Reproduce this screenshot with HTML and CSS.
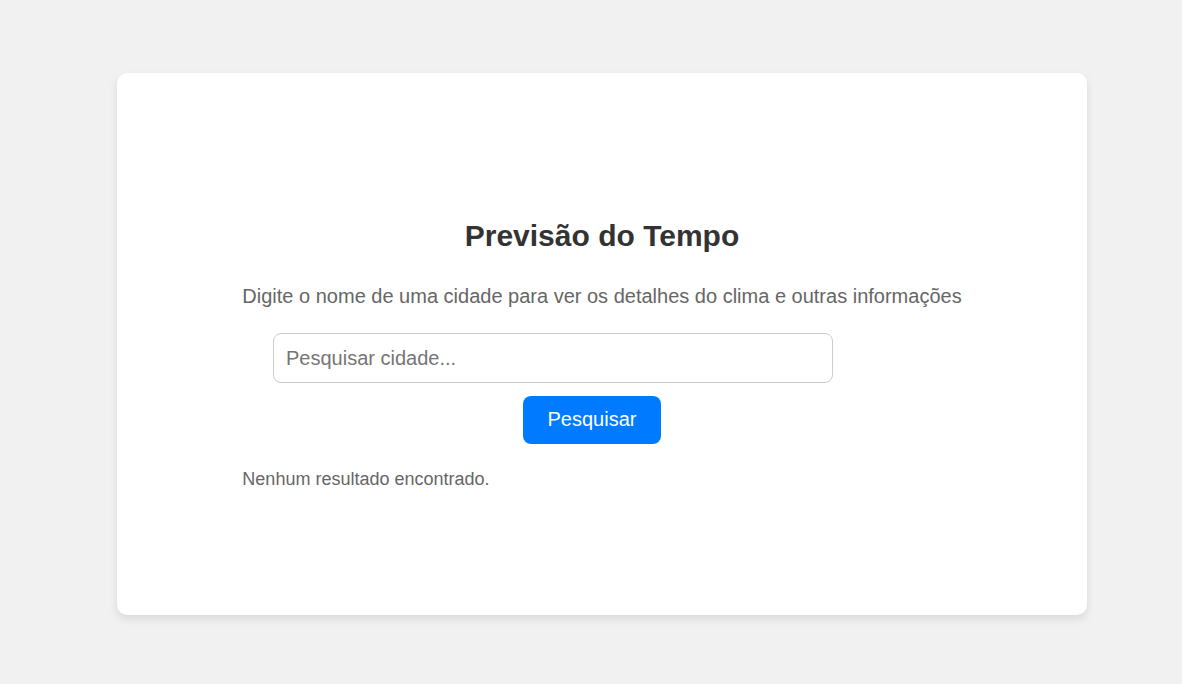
FILE: index.html
```html
<!DOCTYPE html>
<html lang="pt-BR">
<head>
<meta charset="utf-8">
<meta name="viewport" content="width=device-width, initial-scale=1">
<title>Previsão do Tempo</title>
<link rel="stylesheet" href="styles.css">
</head>
<body>
<main class="card">
  <div class="content">
    <h1 class="title">Previsão do Tempo</h1>
    <p class="lead">Digite o nome de uma cidade para ver os detalhes do clima e outras informações</p>
    <form class="search">
      <input class="search-input" type="text" placeholder="Pesquisar cidade..." aria-label="Pesquisar cidade">
      <button class="search-button" type="button">Pesquisar</button>
    </form>
    <p class="result">Nenhum resultado encontrado.</p>
  </div>
</main>
</body>
</html>
```

FILE: styles.css
```css
* {
  box-sizing: border-box;
}

body {
  margin: 0;
  min-height: 100vh;
  padding: 73px 95px 69px 117px;
  display: flex;
  background: #f1f1f1;
  color: #666;
  font-family: "Liberation Sans", Arial, sans-serif;
}

.card {
  flex: 1;
  display: flex;
  justify-content: center;
  align-items: center;
  padding: 40px 20px 20px;
  background: #fff;
  border-radius: 10px;
  box-shadow: 0 4px 8px rgba(0, 0, 0, 0.1);
}

.content {
  display: flex;
  flex-direction: column;
}

.title {
  margin: 0 0 30px;
  color: #333;
  font-size: 30px;
  line-height: 36px;
  text-align: center;
}

.lead {
  margin: 0 0 25px;
  font-size: 20px;
  line-height: 24px;
}

.search {
  display: flex;
  flex-direction: column;
  align-items: center;
  gap: 13px;
  padding-right: 20px;
}

.search-input {
  width: 560px;
  max-width: 100%;
  height: 50px;
  margin-right: 78px;
  padding: 0 12px;
  border: 1px solid #ccc;
  border-radius: 8px;
  background: #fff;
  font: inherit;
  font-size: 20px;
}

.search-button {
  height: 48px;
  padding: 0 25px 2px;
  border: 0;
  border-radius: 8px;
  background: #007bff;
  color: #fff;
  font: inherit;
  font-size: 20px;
}

.result {
  margin: 24px 0 0;
  font-size: 18px;
  line-height: 22px;
}
```
